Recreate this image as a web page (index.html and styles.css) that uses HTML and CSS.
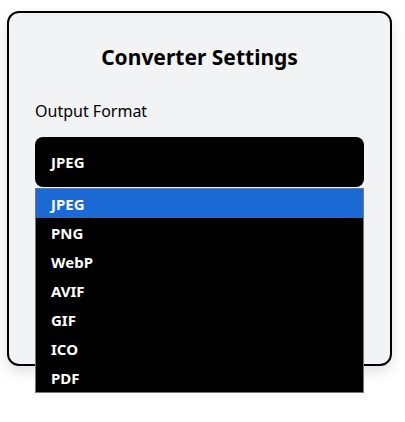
FILE: index.html
```html
<!DOCTYPE html>
<html>
  <head>
    <title>Converter Settings</title>
    <link rel="stylesheet" href="styles.css">
  </head>
  <body>
    <div class="settings-card">
      <h2 class="settings-title">Converter Settings</h2>

      <label class="field-label" for="outputFormat">Output Format</label>
      <div class="select-wrap">
        <div class="select-box" id="outputFormat">JPEG</div>

        <!-- opened dropdown list -->
        <ul class="select-list">
          <li class="select-option selected">JPEG</li>
          <li class="select-option">PNG</li>
          <li class="select-option">WebP</li>
          <li class="select-option">AVIF</li>
          <li class="select-option">GIF</li>
          <li class="select-option">ICO</li>
          <li class="select-option">PDF</li>
        </ul>
      </div>
    </div>
  </body>
</html>
```

FILE: styles.css
```css
html,
body {
  min-height: 100%;
}

body {
  margin: 0;
  padding-bottom: 56px;
  background-color: #fff;
  font-family: "Noto Sans", "Open Sans", sans-serif;
  color: #000;
}

.settings-card {
  box-sizing: border-box;
  height: 355px;
  margin: 11px 13px 0 7px;
  padding: 30px 26px 0 26px;
  background-color: #f2f3f5;
  border: 2px solid #000;
  border-radius: 12px;
  box-shadow: 0 6px 14px rgba(0, 0, 0, 0.12);
}

.settings-title {
  margin: 0;
  font-size: 21px;
  line-height: 28px;
  font-weight: bold;
  text-align: center;
}

.field-label {
  display: block;
  margin-top: 28px;
  font-size: 16px;
  line-height: 24px;
}

.select-wrap {
  position: relative;
  margin-top: 14px;
}

.select-box {
  box-sizing: border-box;
  height: 50px;
  padding: 0 16px;
  display: flex;
  align-items: center;
  background-color: #000;
  color: #fff;
  border-radius: 8px;
  font-size: 15px;
  font-weight: bold;
}

.select-list {
  position: absolute;
  top: 51px;
  left: 0;
  right: 0;
  z-index: 2;
  margin: 0;
  padding: 0;
  list-style: none;
  background-color: #000;
  border: 1px solid #767676;
}

.select-option {
  height: 29px;
  padding: 0 15px;
  display: flex;
  align-items: center;
  color: #fff;
  font-size: 15px;
  font-weight: bold;
}

.select-option.selected {
  background-color: #1b69d4;
}
```
